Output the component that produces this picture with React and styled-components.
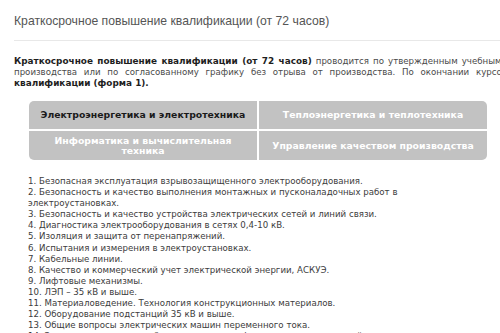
import React from "react";
import styled, { createGlobalStyle } from "styled-components";

const Global = createGlobalStyle`
  html, body { margin: 0; padding: 0; background: #fff; }
  body { overflow: hidden; width: 500px; height: 333px; }
`;

const Page = styled.div`
  padding: 12px 0 0 14px;
  width: 800px;
`;

const Title = styled.h1`
  margin: 0;
  font-family: "Liberation Sans", Arial, sans-serif;
  font-weight: normal;
  font-size: 12.2px;
  line-height: 18px;
  color: #555;
  padding-bottom: 10px;
  border-bottom: 1px solid #e8e8e8;
`;

const Intro = styled.div`
  margin-top: 15px;
  font-family: "DejaVu Sans", Verdana, sans-serif;
  font-size: 8.65px;
  line-height: 11px;
  color: #4a4a4a;
`;

const Line = styled.div`
  white-space: nowrap;
  height: 11px;
  word-spacing: ${(p) => p.$spacing}px;
`;

const B = styled.b`
  color: #1e1e1e;
  font-size: 8.9px;
  line-height: 11px;
`;

const Tabs = styled.div`
  margin: 12px 0 0 15px;
  width: 458px;
  display: grid;
  grid-template-columns: 228px 228px;
  gap: 2px;
`;

const Tab = styled.div`
  background: #c2c2c2;
  height: ${(p) => (p.$tall ? 29 : 28)}px;
  display: flex;
  align-items: center;
  justify-content: center;
  text-align: center;
  font-family: "DejaVu Sans", Verdana, sans-serif;
  font-weight: bold;
  font-size: 9.3px;
  line-height: 10px;
  color: ${(p) => (p.$active ? "#1a1a1a" : "#fff")};
  border-radius: ${(p) => p.$radius};
  padding: 0 10px;
  cursor: pointer;
`;

const List = styled.div`
  margin: 16px 0 0 14px;
  width: 400px;
  font-family: "DejaVu Sans", Verdana, sans-serif;
  font-size: 8.65px;
  line-height: 11.1px;
  color: #3c3c3c;
`;

const Item = styled.div``;

const items = [
  "Безопасная эксплуатация взрывозащищенного электрооборудования.",
  "Безопасность и качество выполнения монтажных и пусконаладочных работ в электроустановках.",
  "Безопасность и качество устройства электрических сетей и линий связи.",
  "Диагностика электрооборудования в сетях 0,4-10 кВ.",
  "Изоляция и защита от перенапряжений.",
  "Испытания и измерения в электроустановках.",
  "Кабельные линии.",
  "Качество и коммерческий учет электрической энергии, АСКУЭ.",
  "Лифтовые механизмы.",
  "ЛЭП – 35 кВ и выше.",
  "Материаловедение. Технология конструкционных материалов.",
  "Оборудование подстанций 35 кВ и выше.",
  "Общие вопросы электрических машин переменного тока.",
  "Эксплуатация электрооборудования трансформаторных подстанций.",
];

const tabs = [
  { label: "Электроэнергетика и электротехника", radius: "5px 0 0 0" },
  { label: "Теплоэнергетика и теплотехника", radius: "0 5px 0 0" },
  { label: "Информатика и вычислительная техника", radius: "0 0 0 5px", tall: true },
  { label: "Управление качеством производства", radius: "0 0 5px 0", tall: true },
];

export default function App() {
  return (
    <>
      <Global />
      <Page>
        <Title>Краткосрочное повышение квалификации (от 72 часов)</Title>
        <Intro>
          <Line $spacing={1.3}>
            <B>Краткосрочное повышение квалификации (от 72 часов)</B> проводится по утвержденным учебным планам с учетом специфики
          </Line>
          <Line $spacing={4.0}>
            производства или по согласованному графику без отрыва от производства. По окончании курсов выдается <B>удостоверение о повышении</B>
          </Line>
          <Line $spacing={0}>
            <B>квалификации (форма 1).</B>
          </Line>
        </Intro>
        <Tabs>
          {tabs.map((t, i) => (
            <Tab key={i} $active={i === 0} $tall={t.tall} $radius={t.radius}>
              {t.label}
            </Tab>
          ))}
        </Tabs>
        <List>
          {items.map((t, i) => (
            <Item key={i}>{i + 1}. {t}</Item>
          ))}
        </List>
      </Page>
    </>
  );
}
